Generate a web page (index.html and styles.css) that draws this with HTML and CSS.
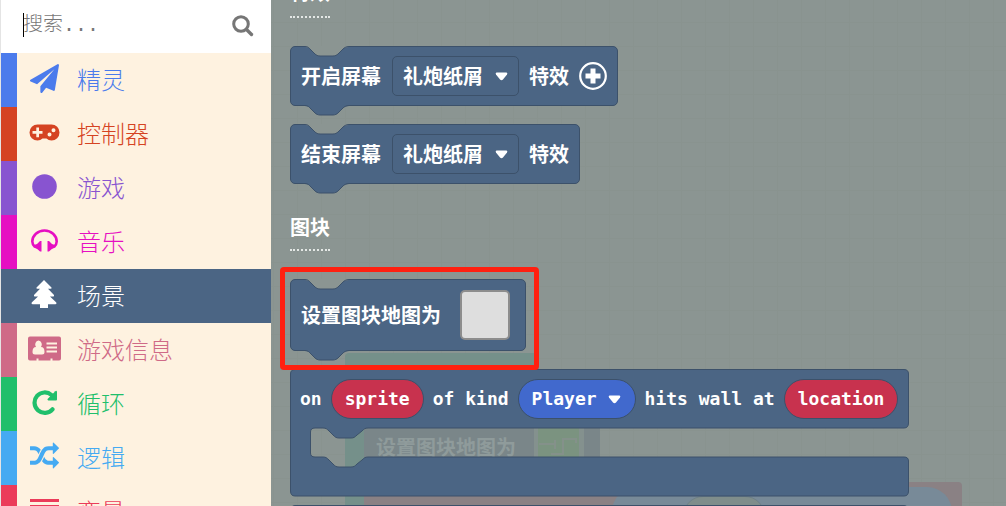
FILE: index.html
```html
<!DOCTYPE html>
<html lang="zh-CN">
<head>
<meta charset="utf-8">
<title>积木编辑器</title>
<meta name="viewport" content="width=device-width, initial-scale=1">
<link rel="stylesheet" href="styles.css">
</head>
<body>
<svg class="defs" aria-hidden="true">
  <symbol id="notch" viewBox="0 0 44 11">
    <path class="notch-fill" d="M0 0V1C3 1 4 2 5 3L10 8C11 9 13 10 15 10H28C30 10 32 9 33 8L38 3C39 2 41 1 44 1V0Z"/>
    <path class="notch-line" d="M0 .5C3 .5 4 2 5 3L10 8C11 9 13 10 15 10H28C30 10 32 9 33 8L38 3C39 2 41 .5 44 .5"/>
  </symbol>
  <symbol id="caret" viewBox="0 0 13 9"><path fill="#fff" d="M1.500 0.500H11.500Q13 1 12 2.500L8 7.500Q6.500 9 5 7.500L1 2.500Q0 1 1.500 0.500Z"/></symbol>
</svg>
<div class="editor">
  <aside class="toolbox">
    <div class="search">
      <input class="search-input" type="text" placeholder="搜索..." aria-label="搜索">
      <span class="cursor"></span>
      <button class="search-button" aria-label="搜索">
        <svg width="22" height="22" viewBox="0 0 22 22"><circle cx="9" cy="9" r="7.300" fill="none" stroke="#767676" stroke-width="3"/><path d="M14.500 14.500L19.500 19.500" stroke="#767676" stroke-width="3.400" stroke-linecap="round"/></svg>
      </button>
    </div>
    <nav class="categories">
      <button class="category sprites"><span class="icon"><svg width="29" height="29" viewBox="0 0 1792 1792"><path d="M1764 11q33 24 27 64l-256 1536q-5 29-32 45-14 8-31 8-11 0-24-5l-453-185-242 295q-18 23-49 23-13 0-22-4-19-7-30.500-23.500t-11.500-36.500v-349l864-1059-1069 925-395-162q-37-14-40-55-2-40 32-59l1664-960q15-9 32-9 20 0 36 11z"/></svg></span>精灵</button>
      <button class="category controller"><span class="icon"><svg width="31" height="17" viewBox="0 0 31 17"><path fill-rule="evenodd" d="M8.500 0.500H22.500A8 8 0 0 1 22.500 16.500Q19.500 16.500 17.500 14.500H13.500Q11.500 16.500 8.500 16.500A8 8 0 0 1 8.500 0.500ZM7.300 3.500V7H3.500V9.700H7.300V13.300H10V9.700H13.500V7H10V3.500ZM20.500 8.600A2 2 0 1 0 20.500 12.600A2 2 0 1 0 20.500 8.600ZM24.500 4.300A2 2 0 1 0 24.500 8.300A2 2 0 1 0 24.500 4.300Z"/></svg></span>控制器</button>
      <button class="category game"><span class="icon"><svg width="25" height="25" viewBox="0 0 25 25"><circle cx="12.500" cy="12.500" r="12.300"/></svg></span>游戏</button>
      <button class="category music"><span class="icon"><svg width="27" height="23" viewBox="0 0 27 23"><path d="M4 18Q1.300 15.500 1.300 12.500A12.200 11 0 0 1 25.700 12.500Q25.700 15.500 23 18" fill="none" stroke="currentColor" stroke-width="2.600"/><path d="M10.500 12V22.500H9Q7 20 3 18.500V16Q7 15 9 12ZM16.500 12V22.500H18Q20 20 24 18.500V16Q20 15 18 12Z"/></svg></span>音乐</button>
      <button class="category scene" aria-current="true"><span class="icon"><svg width="26" height="28" viewBox="0 0 26 28"><path d="M13 0L20.500 7.500Q21 8.700 19.500 8.700H17L23 15Q23.500 16.500 22 16.500H19L25.300 22.500Q26 24 24.500 24.300H17V28H9V24.300H1.500Q0 24 0.700 22.500L7 16.500H4Q2.500 16.500 3 15L9 8.700H6.500Q5 8.700 5.500 7.500Z"/></svg></span>场景</button>
      <button class="category info"><span class="icon"><svg width="33" height="25" viewBox="0 0 33 25"><path fill-rule="evenodd" d="M2 0.500H31Q33 0.500 33 2.500V22.500Q33 24.500 31 24.500H24.500V22.500H22.500V24.500H10.500V22.500H8.500V24.500H2Q0 24.500 0 22.500V2.500Q0 0.500 2 0.500ZM10.500 4.500A3.700 4 0 0 0 8 11Q4.500 11 4.500 16Q4.500 18.500 7 18.500H14Q16.500 18.500 16.500 16Q16.500 11 13 11A3.700 4 0 0 0 10.500 4.500ZM18.500 6.500V8.500H29V6.500ZM18.500 10.500V12.500H29V10.500ZM18.500 14.500V16.500H29V14.500Z"/></svg></span>游戏信息</button>
      <button class="category loops"><span class="icon"><svg width="25" height="25" viewBox="0 0 25 25"><path d="M20.500 19.300A10.200 10.200 0 1 1 19.500 5" fill="none" stroke="currentColor" stroke-width="4.200" stroke-linecap="round"/><path d="M25 1.800V9.500Q25 10.500 24 10.500H16.300Q14.800 10 15.800 8.800L23.300 1.200Q24.700 0.300 25 1.800Z"/></svg></span>循环</button>
      <button class="category logic"><span class="icon"><svg width="29" height="29" viewBox="0 0 1792 1792"><path d="M666 481q-60 92-137 273-22-45-37-72.500t-40.500-63.500-51-56.500-63-35-81.500-14.500h-224q-14 0-23-9t-9-23v-192q0-14 9-23t23-9h224q250 0 410 225zm1126 799q0 14-9 23l-320 320q-9 9-23 9-13 0-22.500-9.500t-9.500-22.500v-192q-32 0-85 .5t-81 1-73-1-71-5-64-10.500-63-18.500-58-28.500-59-40-55-53.500-56-69.500q59-93 136-273 22 45 37 72.500t40.500 63.500 51 56.500 63 35 81.500 14.500h256v-192q0-14 9-23t23-9q12 0 24 10l319 319q9 9 9 23zm0-896q0 14-9 23l-320 320q-9 9-23 9-13 0-22.500-9.500t-9.500-22.500v-192h-256q-48 0-87 15t-69 45-51 61.500-45 77.500q-32 62-78 171-29 66-49.500 111t-54 105-64 100-74 83-90 68.500-106.500 42-128 16.500h-224q-14 0-23-9t-9-23v-192q0-14 9-23t23-9h224q48 0 87-15t69-45 51-61.500 45-77.500q32-62 78-171 29-66 49.500-111t54-105 64-100 74-83 90-68.500 106.500-42 128-16.500h256v-192q0-14 9-23t23-9q12 0 24 10l319 319q9 9 9 23z"/></svg></span>逻辑</button>
      <button class="category variables"><span class="icon"><svg width="29" height="25" viewBox="0 0 29 25"><path d="M0 1H29V4H0ZM0 7H29V10H0ZM0 13H29V16H0ZM0 19H29V22H0Z"/></svg></span>变量</button>
    </nav>
  </aside>

  <main class="workspace">
    <div class="canvas" aria-hidden="true">
      <div class="ghost ghost-head"></div>
      <div class="ghost ghost-rail"></div>
      <div class="ghost ghost-set">设置图块地图为
        <svg width="50" height="40" viewBox="0 0 50 40"><rect width="50" height="40" fill="#84918e"/><rect x="4" width="41" height="40" fill="#7b9380"/><path d="M5 18H21V14V23M17 28H29V13H42V17" fill="none" stroke="#84918a" stroke-width="2"/></svg>
      </div>
      <div class="ghost ghost-call"></div>
      <div class="ghost ghost-oval"></div>
      <div class="ghost ghost-pick"></div>
    </div>

    <div class="flyout">
      <h2 class="group">特效</h2>
      <div class="block">
        <svg class="notch" width="44" height="11"><use href="#notch"/></svg>
        <label for="start-effect">开启屏幕</label>
        <span class="field"><select id="start-effect"><option>礼炮纸屑</option></select><svg class="caret" width="13" height="9"><use href="#caret"/></svg></span>
        <span>特效</span>
        <button class="expand" aria-label="展开"><svg width="28" height="28" viewBox="0 0 28 28"><circle cx="14" cy="14" r="12.800" fill="none" stroke="#fff" stroke-width="2.200"/><path d="M14 6.500V21.500M6.500 14H21.500" stroke="#fff" stroke-width="5"/></svg></button>
        <svg class="bump" width="44" height="11"><use href="#notch"/></svg>
      </div>
      <div class="block">
        <svg class="notch" width="44" height="11"><use href="#notch"/></svg>
        <label for="end-effect">结束屏幕</label>
        <span class="field"><select id="end-effect"><option>礼炮纸屑</option></select><svg class="caret" width="13" height="9"><use href="#caret"/></svg></span>
        <span>特效</span>
        <svg class="bump" width="44" height="11"><use href="#notch"/></svg>
      </div>
      <h2 class="group">图块</h2>
      <div class="block tilemap">
        <svg class="notch" width="44" height="11"><use href="#notch"/></svg>
        <span>设置图块地图为</span>
        <button class="swatch" aria-label="图块地图"></button>
        <svg class="bump" width="44" height="11"><use href="#notch"/></svg>
        <div class="highlight"></div>
      </div>
      <div class="event">
        <svg class="event-shape" width="619" height="128" viewBox="0 0 619 128"><path d="M5 .5H614Q618.500 .5 618.500 5V54Q618.500 59 614 59H78C75 59 74 60 72 62L67 66C65 68 64 69 61 69H49C46 69 45 68 43 66L39 62C37 60 36 59 33 59H25Q20.500 59 20.500 63V84Q20.500 88 25 88H33C36 88 37 89 39 91L43 95C45 97 46 98 49 98H61C64 98 65 97 67 95L72 91C74 89 75 88 78 88H614Q618.500 88 618.500 92V122Q618.500 127 614 127H5Q.5 127 .5 122V5Q.5 .5 5 .5Z" fill="#4b6584" stroke="#3c516a"/></svg>
        <div class="event-row">
          <span>on</span>
          <span class="pill">sprite</span>
          <label for="kind">of kind</label>
          <span class="field kind"><select id="kind"><option>Player</option></select><svg class="caret" width="13" height="9"><use href="#caret"/></svg></span>
          <span>hits wall at</span>
          <span class="pill">location</span>
        </div>
      </div>
      <div class="event-next"></div>
    </div>
  </main>
</div>
</body>
</html>
```
FILE: styles.css
```css
* { box-sizing: border-box; }

body {
  margin: 0;
  background: #fff;
  font-family: "Noto Sans CJK SC", sans-serif;
}

button, input, select {
  margin: 0;
  padding: 0;
  border: 0;
  background: none;
  color: inherit;
  font: inherit;
}

.defs { position: absolute; width: 0; height: 0; }
.notch-fill { fill: var(--notch-fill); }
.notch-line { fill: none; stroke: #3c516a; }

.editor {
  display: flex;
  height: 100vh;
  overflow: hidden;
}

/* Toolbox */
.toolbox {
  flex: none;
  width: 271px;
  border-left: 1px solid #e4e4e4;
  background: #fef2e0;
  overflow: hidden;
}

.search {
  position: relative;
  display: flex;
  align-items: center;
  height: 53px;
  padding: 0 17px 2px 22px;
  background: #fff;
}

.search-input {
  flex: 1;
  min-width: 0;
  outline: 0;
  font-family: "Liberation Mono", "Noto Sans CJK SC", monospace;
  font-size: 20px;
}

.search-input::placeholder { color: #777; font-weight: 300; }

.cursor {
  position: absolute;
  left: 22px;
  top: 13px;
  width: 1px;
  height: 24px;
  background: #000;
}

.search-button { display: flex; }

.category {
  display: flex;
  align-items: center;
  width: 100%;
  height: 54px;
  padding-bottom: 4px;
  border-left: 16px solid var(--tone);
  color: var(--tone);
  font-size: 24px;
  font-weight: 300;
  text-align: left;
}

.icon {
  display: flex;
  justify-content: center;
  width: 54px;
  margin-right: 6px;
}

.icon svg { fill: currentColor; }

.sprites { --tone: #4b7bec; }
.controller { --tone: #d54322; }
.game { --tone: #8854d0; }
.music { --tone: #e60fc2; }
.scene { --tone: #4b6584; background: #4b6584; color: #fff; }
.info { --tone: #cf6a87; }
.loops { --tone: #20bf6b; }
.logic { --tone: #45aaf2; }
.variables { --tone: #eb3b5a; }

/* Workspace */
.workspace {
  position: relative;
  flex: 1;
  min-width: 0;
  overflow: hidden;
  background-color: #8b9592;
  background-image:
    linear-gradient(#89938f 1px, transparent 1px),
    linear-gradient(90deg, #89938f 1px, transparent 1px);
  background-position: 26px 22px;
  background-size: 24px 24px;
}

.canvas { position: absolute; inset: 0; }
.ghost { position: absolute; }

.ghost-head {
  left: 74px;
  top: 353px;
  width: 194px;
  height: 40px;
  border-radius: 4px;
  background: #75908a;
}

.ghost-rail {
  left: 74px;
  top: 390px;
  bottom: 0;
  width: 19px;
  background: #75908a;
}

.ghost-set {
  display: flex;
  align-items: center;
  gap: 18px;
  left: 93px;
  top: 422px;
  width: 236px;
  height: 48px;
  padding-left: 12px;
  background: #7a8689;
  color: #8f9b9b;
  font-size: 20px;
  font-weight: 700;
}

.ghost-call {
  left: 93px;
  top: 482px;
  width: 598px;
  height: 60px;
  border-radius: 4px;
  background: #8a8184;
}

.ghost-oval {
  left: 341px;
  top: 487px;
  width: 340px;
  height: 50px;
  border-radius: 25px;
  background: #788a98;
}

.ghost-pick {
  left: 412px;
  top: 496px;
  width: 82px;
  height: 40px;
  border: 1px solid #6e8088;
  border-radius: 20px;
  background: #7f8d8b;
}

/* Flyout */
.flyout {
  position: relative;
  display: flex;
  flex-direction: column;
  align-items: flex-start;
  gap: 18px;
  margin-top: -18px;
  padding-left: 19px;
  color: #fff;
  font-size: 20px;
  font-weight: 700;
  line-height: 24px;
}

.group {
  margin: 0 0 10px;
  padding-bottom: 10px;
  border-bottom: 2px dotted #e4e8e6;
  font-size: 20px;
}

.group:first-child {
  padding-bottom: 14px;
  line-height: 20px;
}

.block + .group { margin-top: 13px; }

.block {
  position: relative;
  display: flex;
  align-items: center;
  gap: 10px;
  min-height: 60px;
  padding: 0 10px;
  border: 1px solid #3c516a;
  border-radius: 5px;
  background: #4b6584;
}

.block label { padding-right: 1px; }

.notch, .bump {
  position: absolute;
  left: 14px;
}

.notch { top: -1px; --notch-fill: #8b9592; }
.bump { top: 100%; --notch-fill: #4b6584; }

.field {
  position: relative;
  display: flex;
}

.field select {
  appearance: none;
  width: 127px;
  height: 40px;
  padding: 0 10px;
  border: 1px solid #3c516a;
  border-radius: 5px;
  background: #4b6584;
}

.caret {
  position: absolute;
  right: 11px;
  top: 16px;
  pointer-events: none;
}

.expand { display: flex; }

.tilemap {
  gap: 19px;
  min-height: 72px;
  padding-right: 15px;
}

.swatch {
  width: 50px;
  height: 50px;
  border: 2px solid #8d8d8d;
  border-radius: 5px;
  background: #dedede;
}

.highlight {
  position: absolute;
  inset: -13px -14px -20px -11px;
  z-index: 1;
  border: 5px solid #ff2010;
  border-radius: 4px;
  pointer-events: none;
}

.event {
  position: relative;
  width: 619px;
  height: 128px;
}

.event-shape { position: absolute; inset: 0; }

.event-row {
  position: relative;
  display: flex;
  align-items: center;
  gap: 9px;
  height: 60px;
  padding-left: 10px;
  font-family: "DejaVu Sans Mono", monospace;
  font-size: 18px;
  white-space: nowrap;
}

.pill {
  height: 40px;
  padding: 0 13px;
  border: 1px solid #3c516a;
  border-radius: 20px;
  background: #c8324e;
  line-height: 38px;
}

.kind select {
  width: 118px;
  padding: 0 13px;
  border-radius: 20px;
  background: #4169cd;
}

.kind .caret { right: 15px; }

.event-next {
  width: 619px;
  height: 60px;
  margin-top: -10px;
  border: 1px solid #3c516a;
  border-radius: 5px;
  background: #4b6584;
}
```
